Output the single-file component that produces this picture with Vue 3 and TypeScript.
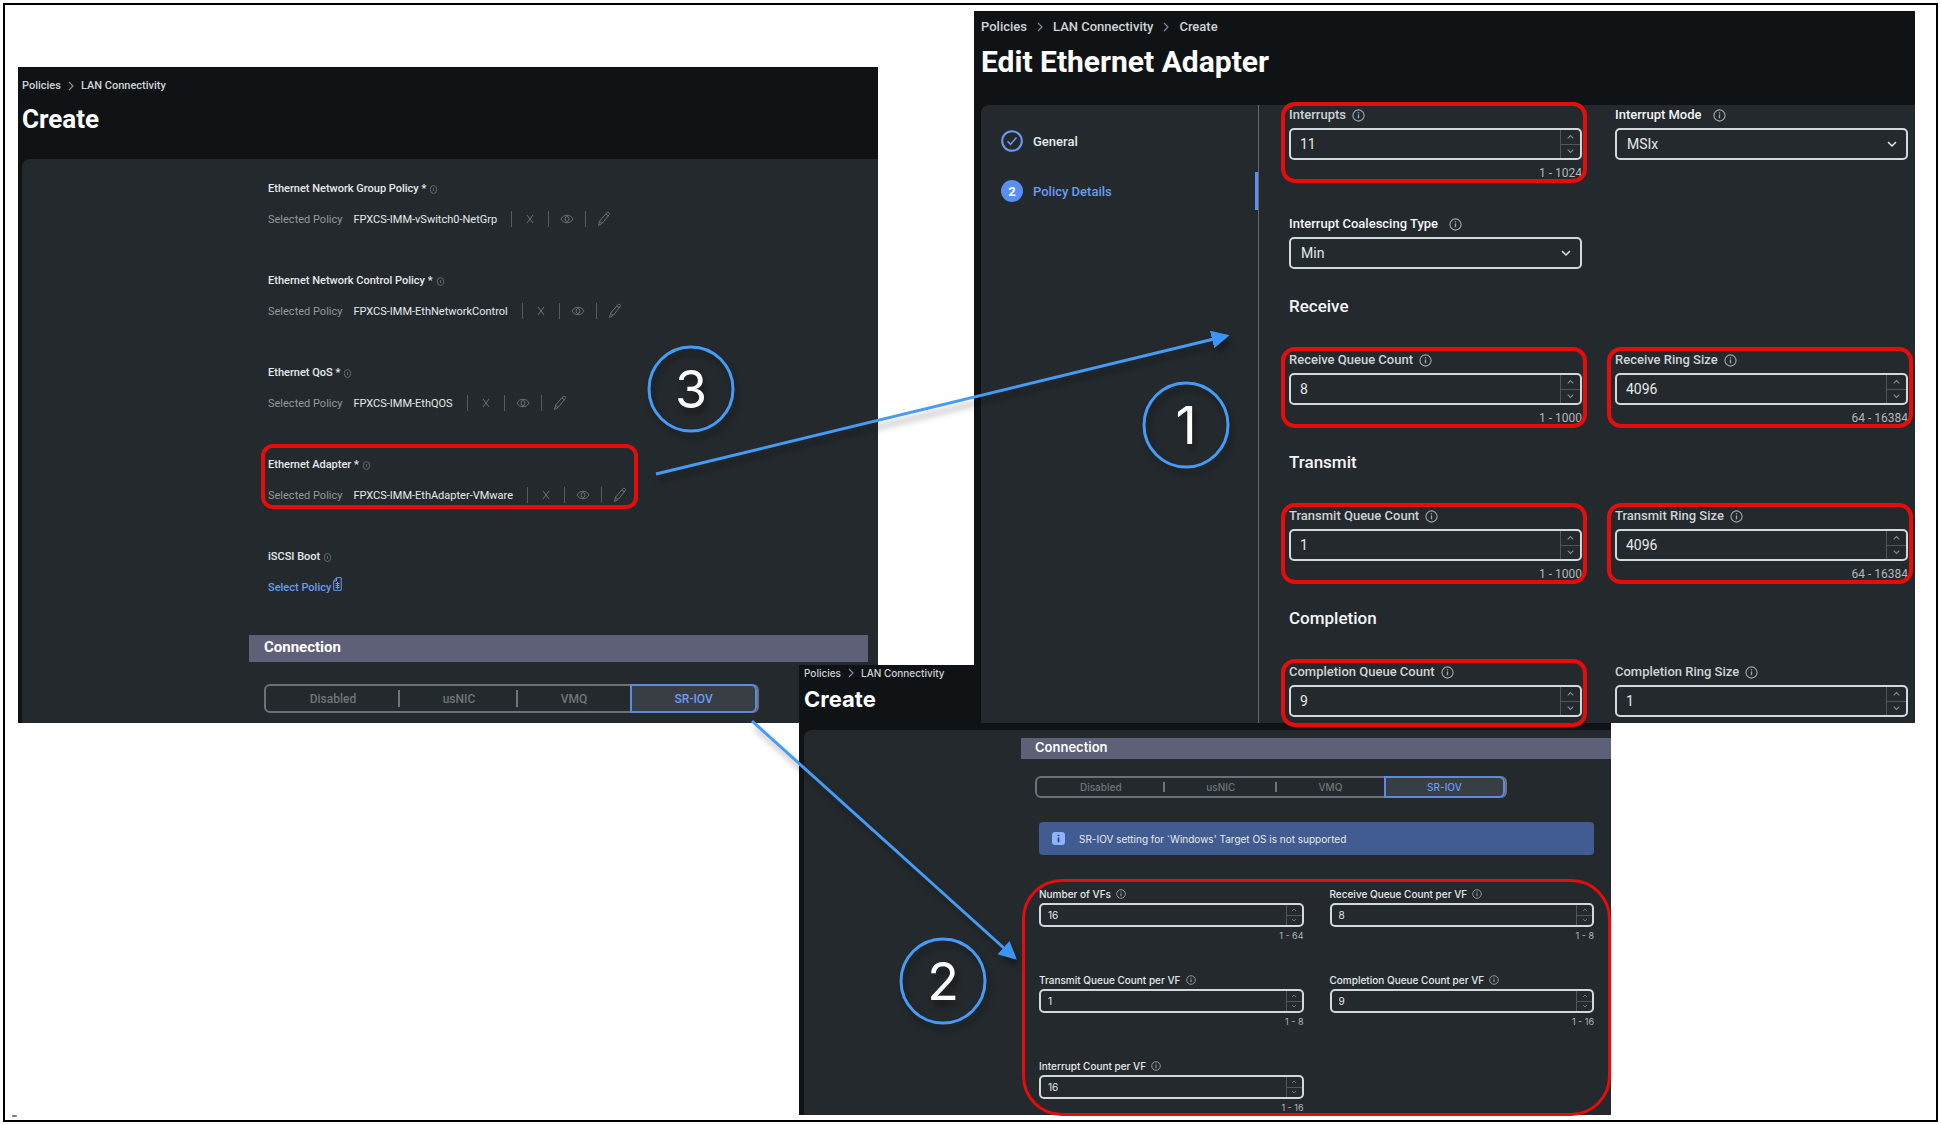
<script setup lang="ts">
import { ref } from 'vue'

interface PolicyRow {
  label: string
  required: boolean
  policy?: string
  marked?: boolean
}

interface NumberField {
  id: string
  label: string
  value: number
  range?: string
  marked?: boolean
}

interface Section {
  title: string
  fields: NumberField[]
}

interface Step {
  label: string
  x: number
  y: number
}

interface Arrow {
  x1: number
  y1: number
  x2: number
  y2: number
}

const policies: PolicyRow[] = [
  { label: 'Ethernet Network Group Policy', required: true, policy: 'FPXCS-IMM-vSwitch0-NetGrp' },
  { label: 'Ethernet Network Control Policy', required: true, policy: 'FPXCS-IMM-EthNetworkControl' },
  { label: 'Ethernet QoS', required: true, policy: 'FPXCS-IMM-EthQOS' },
  { label: 'Ethernet Adapter', required: true, policy: 'FPXCS-IMM-EthAdapter-VMware', marked: true },
  { label: 'iSCSI Boot', required: false },
]

const modes = ['Disabled', 'usNIC', 'VMQ', 'SR-IOV']
const mode = ref('SR-IOV')

const interrupts = ref(11)

const sections = ref<Section[]>([
  {
    title: 'Receive',
    fields: [
      { id: 'rx-count', label: 'Receive Queue Count', value: 8, range: '1 - 1000', marked: true },
      { id: 'rx-ring', label: 'Receive Ring Size', value: 4096, range: '64 - 16384', marked: true },
    ],
  },
  {
    title: 'Transmit',
    fields: [
      { id: 'tx-count', label: 'Transmit Queue Count', value: 1, range: '1 - 1000', marked: true },
      { id: 'tx-ring', label: 'Transmit Ring Size', value: 4096, range: '64 - 16384', marked: true },
    ],
  },
  {
    title: 'Completion',
    fields: [
      { id: 'cq-count', label: 'Completion Queue Count', value: 9, marked: true },
      { id: 'cq-ring', label: 'Completion Ring Size', value: 1 },
    ],
  },
])

const vfFields = ref<NumberField[]>([
  { id: 'vf-number', label: 'Number of VFs', value: 16, range: '1 - 64' },
  { id: 'vf-rx', label: 'Receive Queue Count per VF', value: 8, range: '1 - 8' },
  { id: 'vf-tx', label: 'Transmit Queue Count per VF', value: 1, range: '1 - 8' },
  { id: 'vf-cq', label: 'Completion Queue Count per VF', value: 9, range: '1 - 16' },
  { id: 'vf-int', label: 'Interrupt Count per VF', value: 16, range: '1 - 16' },
])

const steps: Step[] = [
  { label: '3', x: 686, y: 384 },
  { label: '1', x: 1181, y: 420 },
  { label: '2', x: 938, y: 976 },
]

const arrows: Arrow[] = [
  { x1: 651, y1: 469, x2: 1209, y2: 334 },
  { x1: 747, y1: 716, x2: 1000, y2: 944 },
]

// Horizontal places on the figure scale with its width.
const FIGURE_UNITS = 1931
const across = (x: number): string => `${(x / FIGURE_UNITS) * 100}%`
</script>

<template>
  <svg class="sprite" aria-hidden="true">
    <symbol id="i-info" viewBox="0 0 14 14">
      <circle cx="7" cy="7" r="6" fill="none" stroke="currentColor" stroke-width="1.2" />
      <path d="M7 6v4M7 3.6v1.3" stroke="currentColor" stroke-width="1.4" />
    </symbol>
    <symbol id="i-dot-info" viewBox="0 0 9 11">
      <ellipse cx="4.500" cy="5.500" rx="3.200" ry="4" fill="none" stroke="currentColor" />
      <path d="M4.500 4v3" stroke="currentColor" />
    </symbol>
    <symbol id="i-right" viewBox="0 0 8 10">
      <path d="M2 1l4 4-4 4" fill="none" stroke="currentColor" stroke-width="1.2" />
    </symbol>
    <symbol id="i-down" viewBox="0 0 10 8">
      <path d="M1 2l4 4 4-4" fill="none" stroke="currentColor" stroke-width="1.5" />
    </symbol>
    <symbol id="i-up" viewBox="0 0 10 8">
      <path d="M1 6l4-4 4 4" fill="none" stroke="currentColor" stroke-width="1.5" />
    </symbol>
    <symbol id="i-close" viewBox="0 0 8 10">
      <path d="M1 1l6 8M7 1L1 9" fill="none" stroke="currentColor" />
    </symbol>
    <symbol id="i-eye" viewBox="0 0 14 10">
      <path d="M1 5c2.500-5 9.500-5 12 0-2.500 5-9.500 5-12 0z" fill="none" stroke="currentColor" />
      <ellipse cx="7" cy="5" rx="2" ry="2.500" fill="none" stroke="currentColor" />
    </symbol>
    <symbol id="i-pencil" viewBox="0 0 14 16">
      <path d="M1.500 14.500l1.200-4.500L10 1.500c1-1 3.200.6 2.300 2L5.400 12.200zM9 3l2.500 2M2.800 10.500l2.300 1.800" fill="none" stroke="currentColor" />
    </symbol>
    <symbol id="i-file" viewBox="0 0 9 14">
      <path d="M3.500.7h4.700v12.600H.7V4zM3.500.7V4H.7M2.500 6.500h4M2.500 8.500h4M2.500 10.500h4M4.500 5v7" fill="none" stroke="currentColor" />
    </symbol>
  </svg>

  <main class="figure">
    <section class="panel policy-panel">
      <header class="head">
        <nav class="crumbs" aria-label="Breadcrumb">
          <a href="#">Policies</a>
          <svg class="sep"><use href="#i-right" /></svg>
          <a href="#">LAN Connectivity</a>
        </nav>
        <h1>Create</h1>
      </header>
      <div class="card">
        <ul class="policies">
          <li v-for="p in policies" :key="p.label" :class="{ marked: p.marked }">
            <div class="policy-label">
              {{ p.label }}<template v-if="p.required"> *</template>
              <svg class="dot-info"><use href="#i-dot-info" /></svg>
            </div>
            <div v-if="p.policy" class="policy-row">
              <span class="muted">Selected Policy</span>
              <span class="policy-name">{{ p.policy }}</span>
              <button type="button" aria-label="Clear"><svg class="ic-x"><use href="#i-close" /></svg></button>
              <button type="button" aria-label="View"><svg class="ic-eye"><use href="#i-eye" /></svg></button>
              <button type="button" aria-label="Edit"><svg class="ic-pencil"><use href="#i-pencil" /></svg></button>
            </div>
            <div v-else class="policy-row">
              <a class="select-policy" href="#">Select Policy<svg class="ic-file"><use href="#i-file" /></svg></a>
            </div>
          </li>
        </ul>
        <h2 class="bar">Connection</h2>
        <div class="segments" role="group" aria-label="Connection">
          <button v-for="m in modes" :key="m" type="button" :class="{ on: m === mode }" @click="mode = m">{{ m }}</button>
        </div>
      </div>
    </section>

    <section class="panel vf-panel">
      <header class="head">
        <nav class="crumbs" aria-label="Breadcrumb">
          <a href="#">Policies</a>
          <svg class="sep"><use href="#i-right" /></svg>
          <a href="#">LAN Connectivity</a>
        </nav>
        <h1>Create</h1>
      </header>
      <div class="card">
        <h2 class="bar">Connection</h2>
        <div class="segments" role="group" aria-label="Connection">
          <button v-for="m in modes" :key="m" type="button" :class="{ on: m === mode }" @click="mode = m">{{ m }}</button>
        </div>
        <p class="notice">
          <svg class="ic-notice" viewBox="0 0 12 12">
            <rect width="12" height="12" rx="3" fill="#8fb4ff" />
            <path d="M6 5v4.500M6 2.500v1.500" stroke="#2c4474" stroke-width="1.600" />
          </svg>
          SR-IOV setting for `Windows' Target OS is not supported
        </p>
        <div class="fields">
          <div v-for="f in vfFields" :key="f.id" class="field">
            <label :for="f.id">{{ f.label }}<svg class="info"><use href="#i-info" /></svg></label>
            <div class="number">
              <input :id="f.id" v-model="f.value" type="number" />
              <span class="spin">
                <button type="button" aria-label="Increase" @click="f.value++"><svg><use href="#i-up" /></svg></button>
                <button type="button" aria-label="Decrease" @click="f.value--"><svg><use href="#i-down" /></svg></button>
              </span>
            </div>
            <small>{{ f.range }}</small>
          </div>
        </div>
      </div>
    </section>

    <section class="panel adapter-panel">
      <header class="head">
        <nav class="crumbs" aria-label="Breadcrumb">
          <a href="#">Policies</a>
          <svg class="sep"><use href="#i-right" /></svg>
          <a href="#">LAN Connectivity</a>
          <svg class="sep"><use href="#i-right" /></svg>
          <a href="#">Create</a>
        </nav>
        <h1>Edit Ethernet Adapter</h1>
      </header>
      <div class="card">
        <ol class="steps">
          <li>
            <svg class="bullet" viewBox="0 0 22 22">
              <circle cx="11" cy="11" r="9.800" fill="none" stroke="#6a9cf3" stroke-width="2" />
              <path d="M6.500 11.200l3 3.200 6-7" fill="none" stroke="#6a9cf3" stroke-width="1.600" />
            </svg>
            General
          </li>
          <li class="current">
            <span class="bullet">2</span>
            Policy Details
          </li>
        </ol>
        <div class="form">
          <div class="fields">
            <div class="field marked">
              <label for="interrupts">Interrupts<svg class="info"><use href="#i-info" /></svg></label>
              <div class="number">
                <input id="interrupts" v-model="interrupts" type="number" />
                <span class="spin">
                  <button type="button" aria-label="Increase" @click="interrupts++"><svg><use href="#i-up" /></svg></button>
                  <button type="button" aria-label="Decrease" @click="interrupts--"><svg><use href="#i-down" /></svg></button>
                </span>
              </div>
              <small>1 - 1024</small>
            </div>
            <div class="field choice">
              <label for="int-mode">Interrupt Mode<svg class="info"><use href="#i-info" /></svg></label>
              <div class="select">
                <select id="int-mode"><option>MSIx</option></select>
                <svg class="caret"><use href="#i-down" /></svg>
              </div>
            </div>
            <div class="field choice">
              <label for="int-coal">Interrupt Coalescing Type<svg class="info"><use href="#i-info" /></svg></label>
              <div class="select">
                <select id="int-coal"><option>Min</option></select>
                <svg class="caret"><use href="#i-down" /></svg>
              </div>
            </div>
          </div>
          <template v-for="s in sections" :key="s.title">
            <h2>{{ s.title }}</h2>
            <div class="fields">
              <div v-for="f in s.fields" :key="f.id" class="field" :class="{ marked: f.marked, bare: !f.range }">
                <label :for="f.id">{{ f.label }}<svg class="info"><use href="#i-info" /></svg></label>
                <div class="number">
                  <input :id="f.id" v-model="f.value" type="number" />
                  <span class="spin">
                    <button type="button" aria-label="Increase" @click="f.value++"><svg><use href="#i-up" /></svg></button>
                    <button type="button" aria-label="Decrease" @click="f.value--"><svg><use href="#i-down" /></svg></button>
                  </span>
                </div>
                <small v-if="f.range">{{ f.range }}</small>
              </div>
            </div>
          </template>
        </div>
      </div>
    </section>

    <svg class="notes">
      <defs>
        <marker id="tip" viewBox="0 0 18 18" refX="2" refY="9" markerWidth="18" markerHeight="18" markerUnits="userSpaceOnUse" orient="auto">
          <path d="M0 0l18 9-18 9z" fill="#3b94f7" />
        </marker>
      </defs>
      <line
        v-for="a in arrows"
        :key="a.x1"
        :x1="across(a.x1)"
        :y1="a.y1"
        :x2="across(a.x2)"
        :y2="a.y2"
        stroke="#459bf5"
        stroke-width="3"
        marker-end="url(#tip)"
      />
      <g v-for="s in steps" :key="s.label">
        <circle :cx="across(s.x)" :cy="s.y" r="42" fill="none" stroke="#459bf5" stroke-width="3" />
        <text :x="across(s.x)" :y="s.y" dy="19" text-anchor="middle">{{ s.label }}</text>
      </g>
    </svg>
    <span class="mark"></span>
  </main>
</template>

<style>
body {
  margin: 0;
  background: #fff;
}
</style>

<style scoped>
* {
  box-sizing: border-box;
}

.sprite {
  display: none;
}

.figure {
  --edge: #d3d8dd;
  --blue: #6a9cf3;
  --red: #e60c0c;
  display: grid;
  grid-template-columns: 13fr 781fr 79fr 96fr 637fr 304fr 21fr;
  grid-template-rows: 6px 56px 598px 58px 392px 1fr;
  min-height: calc(100vh - 6px);
  margin: 3px;
  border: 2px solid #000;
  background: #fff;
  color: #e6e9ec;
  font-family: Roboto, "Liberation Sans", sans-serif;
}

h1,
h2,
p,
ul,
ol {
  margin: 0;
  padding: 0;
  list-style: none;
}

a {
  color: inherit;
  text-decoration: none;
}

button {
  padding: 0;
  border: 0;
  background: none;
  color: inherit;
  font: inherit;
}

.panel {
  display: flex;
  flex-direction: column;
  background: #0f1316;
}

.card {
  flex: 1;
  background: #24292d;
  border-top-left-radius: 8px;
}

.crumbs {
  display: flex;
  align-items: center;
  font-weight: 500;
  color: #cfd3d6;
}

.sep {
  width: 8px;
  height: 10px;
  color: #868b90;
}

h1 {
  color: #fff;
  font-weight: 700;
}

.bar {
  background: #5d6076;
  color: #fff;
}

.segments {
  display: flex;
  width: 80%;
  border: 2px solid #6b707a;
  border-radius: 6px;
  color: #70757a;
  font-weight: 500;
}

.segments button {
  position: relative;
  flex: 119;
}

.segments button:nth-child(1) {
  flex: 135;
}

.segments button:nth-child(3) {
  flex: 113;
}

.segments button:nth-child(4) {
  flex: 124;
}

.segments button:nth-child(-n + 2)::after {
  content: "";
  position: absolute;
  top: 4px;
  right: 0;
  bottom: 4px;
  width: 2px;
  background: #70757a;
}

.segments .on {
  margin: -2px 0;
  border: 2px solid #5b8ae0;
  border-radius: 0 6px 6px 0;
  background: #393d44;
  color: var(--blue);
}

/* Policy list */
.policy-panel {
  grid-area: 3 / 2 / 5 / 4;
}

.policy-panel .head {
  padding: 11px 4px 25px;
}

.policy-panel .crumbs {
  gap: 6px;
  font-size: 11px;
  line-height: 16px;
}

.policy-panel h1 {
  margin-top: 10px;
  font-size: 26px;
  line-height: 30px;
}

.policy-panel .card {
  margin-left: 4px;
  padding: 22px 10px 9px 227px;
}

.policies {
  display: flex;
  flex-direction: column;
  align-items: flex-start;
  gap: 43px;
  padding-left: 19px;
  font-size: 11px;
}

.policies li {
  position: relative;
}

.policy-label {
  display: flex;
  align-items: center;
  gap: 3px;
  line-height: 16px;
  white-space: pre;
  font-weight: 500;
}

.dot-info {
  width: 9px;
  height: 11px;
  color: #63686d;
}

.policy-row {
  display: flex;
  align-items: center;
  height: 22px;
  margin-top: 11px;
}

.muted {
  margin-right: 11px;
  color: #93989c;
}

.policy-name {
  margin-right: 14px;
}

.policy-row button {
  display: flex;
  align-items: center;
  justify-content: center;
  width: 37px;
  height: 16px;
  border-left: 1px solid #565b60;
  color: #6c7176;
}

.ic-x {
  width: 8px;
  height: 10px;
}

.ic-eye {
  width: 14px;
  height: 10px;
}

.ic-pencil {
  width: 14px;
  height: 16px;
}

.select-policy {
  display: flex;
  gap: 2px;
  color: var(--blue);
  font-weight: 500;
}

.ic-file {
  width: 9px;
  height: 14px;
  margin-top: -4px;
}

.policies .marked::after {
  content: "";
  position: absolute;
  inset: -13px 0 -3px -7px;
  border: 4px solid var(--red);
  border-radius: 12px;
  pointer-events: none;
}

.policy-panel .bar {
  margin-top: 37px;
  padding: 0 15px;
  font-size: 15px;
  font-weight: 700;
  line-height: 24px;
  height: 27px;
}

.policy-panel .segments {
  height: 29px;
  margin: 22px 0 0 15px;
  font-size: 12px;
}

/* Fields */
.fields {
  display: grid;
  grid-template-columns: 1fr 1fr;
}

.field {
  position: relative;
  display: flex;
  flex-direction: column;
}

.field label {
  display: flex;
  align-items: center;
}

.number,
.select {
  display: flex;
  align-items: stretch;
  border: 2px solid var(--edge);
  border-radius: 5px;
}

.number input,
.select select {
  flex: 1;
  min-width: 0;
  margin: 0;
  padding: 0;
  border: 0;
  outline: 0;
  background: none;
  color: inherit;
  font: inherit;
  appearance: none;
  -moz-appearance: textfield;
}

.number input::-webkit-inner-spin-button {
  appearance: none;
  margin: 0;
}

.spin {
  display: flex;
  flex-direction: column;
  border-left: 1px solid #50555a;
  color: #898e93;
}

.spin button {
  display: flex;
  flex: 1;
  align-items: center;
  justify-content: center;
}

.spin button + button {
  border-top: 1px solid #50555a;
}

.field small {
  align-self: flex-end;
  color: #b3b7bb;
}

/* Ethernet adapter form */
.adapter-panel {
  grid-area: 2 / 5 / 5 / 7;
}

.adapter-panel .head {
  padding: 8px 7px 25px;
}

.adapter-panel .crumbs {
  gap: 9px;
  font-size: 13px;
  line-height: 16px;
}

.adapter-panel h1 {
  margin-top: 9px;
  font-size: 30px;
  line-height: 36px;
}

.adapter-panel .card {
  display: flex;
  margin-left: 7px;
}

.steps {
  display: flex;
  flex-direction: column;
  width: 278px;
  padding-top: 17px;
  border-right: 1px solid #62676c;
  font-size: 13px;
  font-weight: 500;
}

.steps li {
  display: flex;
  align-items: center;
  gap: 10px;
  height: 38px;
  margin-bottom: 12px;
  padding-left: 20px;
}

.steps .current {
  border-right: 3px solid #5990f2;
  color: var(--blue);
}

.bullet {
  display: flex;
  align-items: center;
  justify-content: center;
  width: 22px;
  height: 22px;
}

span.bullet {
  border-radius: 50%;
  background: #5990f2;
  color: #fff;
  font-weight: 700;
}

.form {
  flex: 1;
  padding: 1px 7px 0 30px;
  font-size: 14px;
}

.form .fields {
  gap: 35px 33px;
}

.form h2 {
  margin: 27px 0 35px;
  color: #f4f5f6;
  font-size: 17px;
  font-weight: 500;
  line-height: 20px;
}

.form label {
  gap: 6px;
  margin-bottom: 4px;
  color: #cfd3d6;
  font-size: 13px;
  font-weight: 500;
  line-height: 18px;
}

.form .choice label {
  gap: 11px;
  color: #f4f5f6;
}

.form .info {
  width: 13px;
  height: 13px;
  color: #a3a8ac;
}

.form .number,
.form .select {
  height: 32px;
}

.form input {
  padding-left: 9px;
}

.form .select select {
  padding-left: 10px;
}

.form .select {
  position: relative;
}

.caret {
  position: absolute;
  top: 10px;
  right: 9px;
  width: 10px;
  height: 8px;
  pointer-events: none;
}

.form .spin {
  width: 20px;
}

.form .spin svg {
  width: 7px;
  height: 6px;
}

.form small {
  margin-top: 6px;
  font-size: 12px;
  line-height: 14px;
}

.form .marked::after {
  content: "";
  position: absolute;
  inset: -4px -5px -3px -8px;
  border: 4px solid var(--red);
  border-radius: 14px;
  pointer-events: none;
}

.form .marked.bare::after {
  bottom: -10px;
}

/* SR-IOV panel */
.vf-panel {
  grid-area: 4 / 3 / 6 / 6;
  font-family: Inter, "Liberation Sans", sans-serif;
  font-size: 10px;
}

.vf-panel .head {
  padding: 2px 5px 18px;
}

.vf-panel .crumbs {
  gap: 6px;
  line-height: 12px;
}

.vf-panel h1 {
  margin-top: 7px;
  font-size: 22px;
  line-height: 26px;
}

.vf-panel .card {
  margin-left: 5px;
  padding: 8px 0 0 217px;
}

.vf-panel .bar {
  height: 21px;
  padding: 0 14px;
  font-size: 13px;
  font-weight: 600;
  line-height: 19px;
}

.vf-panel .segments {
  height: 22px;
  margin: 17px 0 0 14px;
}

.notice {
  display: flex;
  align-items: center;
  gap: 14px;
  height: 33px;
  margin: 24px 17px 0 18px;
  padding-left: 13px;
  border-radius: 4px;
  background: #415c90;
}

.ic-notice {
  width: 13px;
  height: 13px;
}

.vf-panel .fields {
  position: relative;
  gap: 32px 26px;
  margin: 33px 17px 0 18px;
}

.vf-panel .fields::after {
  content: "";
  position: absolute;
  inset: -9px -17px -2px -17px;
  border: 3px solid var(--red);
  border-radius: 40px;
  pointer-events: none;
}

.vf-panel label {
  gap: 5px;
  margin-bottom: 3px;
  font-weight: 500;
  line-height: 12px;
}

.vf-panel .info {
  width: 10px;
  height: 10px;
  color: #a3a8ac;
}

.vf-panel .number {
  height: 24px;
}

.vf-panel input {
  padding-left: 7px;
}

.vf-panel .spin {
  width: 16px;
}

.vf-panel .spin svg {
  width: 6px;
  height: 4px;
}

.vf-panel small {
  margin-top: 3px;
  font-size: 9px;
  line-height: 12px;
}

/* Step numbers and arrows above the panels */
.notes {
  grid-area: 1 / 1 / -1 / -1;
  z-index: 1;
  width: 100%;
  height: 100%;
  pointer-events: none;
  filter: drop-shadow(3px 6px 3px rgba(0, 0, 0, 0.35));
}

.notes text {
  fill: #fff;
  font-family: Inter, "Liberation Sans", sans-serif;
  font-size: 52px;
}

.mark {
  grid-area: 6 / 1 / 7 / 3;
  align-self: end;
  width: 5px;
  height: 2px;
  margin: 0 0 3px 7px;
  background: linear-gradient(90deg, #c98a8a, #4d7f86, #a9a9a9);
}
</style>
